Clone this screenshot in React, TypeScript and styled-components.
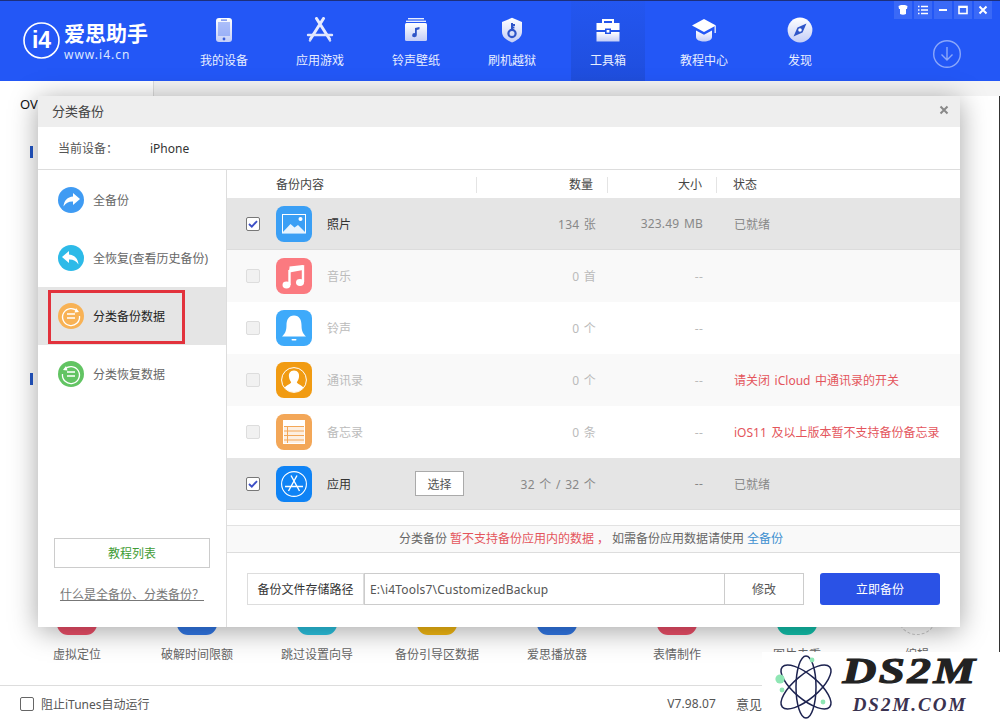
import React from 'react';
import styled, { createGlobalStyle } from 'styled-components';

const GlobalStyle = createGlobalStyle`
  html, body {
    margin: 0;
    padding: 0;
    background: #fff;
  }
  * {
    box-sizing: border-box;
  }
  body {
    font-family: "Noto Sans", "Noto Sans CJK SC", sans-serif;
    font-size: 12px;
    color: #333;
  }
`;

const Page = styled.div`
  position: relative;
  width: 1000px;
  height: 721px;
  overflow: hidden;
  display: flex;
  flex-direction: column;
  background: #fff;
  border-top: 1px solid #1c2f7c;
`;

/* header */
const Header = styled.header`
  height: 80px;
  flex: none;
  display: flex;
  background: #2357f6;
`;

const Logo = styled.div`
  width: 187px;
  flex: none;
  display: flex;
  align-items: flex-start;
  padding: 21px 0 0 23px;
  gap: 4px;
  color: #fff;
`;

const LogoText = styled.div`
  display: flex;
  flex-direction: column;
`;

const LogoName = styled.span`
  font-size: 21px;
  line-height: 22px;
  font-weight: 700;
  white-space: nowrap;
`;

const LogoUrl = styled.span`
  font-size: 12px;
  line-height: 14px;
  margin-top: 4px;
  letter-spacing: 1px;
  color: #dce6ff;
`;

const Nav = styled.nav`
  display: flex;
  gap: 22px;
`;

const NavItem = styled.div<{ $active?: boolean }>`
  width: 74px;
  height: 80px;
  display: flex;
  flex-direction: column;
  align-items: center;
  padding-top: 16px;
  color: #fff;
  background: ${(p) => (p.$active ? 'linear-gradient(#2356f0, #1f4edd)' : 'transparent')};
`;

const NavLabel = styled.span`
  margin-top: 9px;
  line-height: 18px;
  font-size: 12px;
  white-space: nowrap;
  color: #e8eeff;
`;

const WindowButtons = styled.div`
  position: absolute;
  top: 0;
  right: 8px;
  display: flex;
  gap: 2px;
`;

const WindowButton = styled.div`
  width: 18px;
  height: 18px;
  display: flex;
  align-items: center;
  justify-content: center;
  background: #3a69f7;
`;

const DownloadButton = styled.div`
  position: absolute;
  top: 38px;
  right: 38px;
  width: 30px;
  height: 30px;
`;

/* page under the dialog */
const TabBar = styled.div`
  height: 15px;
  flex: none;
  display: flex;
  background: #f4f4f4;
`;

const TabBlank = styled.div`
  width: 154px;
  background: #fff;
  border-right: 1px solid #ddd;
`;

const Main = styled.main`
  flex: 1;
  display: flex;
  flex-direction: column;
  min-height: 0;
  border-right: 1px solid #333;
`;

const Overview = styled.div`
  padding: 0 0 0 20px;
  font-size: 13px;
  line-height: 16px;
  color: #111;
`;

const SectionMark = styled.div<{ $gap: number }>`
  width: 3px;
  height: 12px;
  margin: ${(p) => p.$gap}px 0 0 30px;
  background: #2357c8;
`;

const ToolRow = styled.div`
  margin-top: auto;
  display: flex;
  padding: 0 0 21px 17px;
`;

const Tool = styled.div`
  width: 120px;
  display: flex;
  flex-direction: column;
  align-items: center;
  gap: 11px;
  color: #666;
  white-space: nowrap;
`;

const ToolTile = styled.div<{ $color: string; $dashed?: boolean }>`
  width: 40px;
  height: 40px;
  border-radius: ${(p) => (p.$dashed ? '50%' : '11px')};
  background: ${(p) => (p.$dashed ? 'transparent' : p.$color)};
  border: ${(p) => (p.$dashed ? '1px dashed #ccc' : 'none')};
`;

const ToolLabel = styled.span`
  line-height: 18px;
`;

const Footer = styled.footer`
  height: 36px;
  flex: none;
  display: flex;
  align-items: center;
  padding: 0 238px 0 20px;
  border-top: 1px solid #ddd;
  color: #555;
`;

const FooterCheck = styled.span`
  width: 14px;
  height: 14px;
  margin-right: 7px;
  border: 1px solid #666;
  border-radius: 2px;
`;

const Version = styled.span`
  margin-left: auto;
  margin-right: 20px;
  letter-spacing: 0.1px;
`;

const Feedback = styled.span`
  font-size: 13px;
`;

/* dialog */
const Dialog = styled.section`
  position: absolute;
  left: 38px;
  top: 95px;
  width: 922px;
  height: 531px;
  display: flex;
  flex-direction: column;
  background: #fff;
  box-shadow: 0 4px 26px rgba(0, 0, 0, 0.36);
`;

const TitleBar = styled.div`
  height: 31px;
  flex: none;
  display: flex;
  align-items: center;
  justify-content: space-between;
  padding: 0 11px 3px 14px;
  background: #eeeeee;
  font-size: 13px;
  color: #444;
`;

const DeviceBar = styled.div`
  height: 43px;
  flex: none;
  display: flex;
  align-items: center;
  padding-left: 20px;
  border-bottom: 1px solid #ddd;
  color: #555;
`;

const DeviceName = styled.span`
  margin-left: 32px;
  color: #333;
`;

const DialogBody = styled.div`
  flex: 1;
  display: flex;
  min-height: 0;
`;

const Sidebar = styled.aside`
  width: 189px;
  flex: none;
  display: flex;
  flex-direction: column;
  padding-top: 1px;
  border-right: 1px solid #ddd;
`;

const SideItem = styled.div<{ $active?: boolean }>`
  position: relative;
  height: 58px;
  display: flex;
  align-items: center;
  gap: 9px;
  padding-left: 20px;
  background: ${(p) => (p.$active ? '#e5e5e5' : '#fff')};
  color: ${(p) => (p.$active ? '#222' : '#666')};
  white-space: nowrap;
`;

const RedBox = styled.div`
  position: absolute;
  left: 10px;
  top: 3px;
  width: 137px;
  height: 54px;
  border: 3px solid #e2323c;
`;

const TutorialButton = styled.div`
  height: 30px;
  margin: auto 16px 0;
  display: flex;
  align-items: center;
  justify-content: center;
  border: 1px solid #ccc;
  color: #3f9c35;
`;

const HelpLink = styled.div`
  margin: 18px 0 23px;
  text-align: center;
  color: #777;
  text-decoration: underline;
  line-height: 18px;
`;

const Content = styled.div`
  flex: 1;
  display: flex;
  flex-direction: column;
  min-width: 0;
`;

const TableHead = styled.div`
  height: 28px;
  flex: none;
  display: flex;
  align-items: center;
  padding-top: 2px;
  color: #444;
`;

const HeadCell = styled.div<{ $width: number; $right?: boolean }>`
  width: ${(p) => p.$width}px;
  flex: none;
  text-align: ${(p) => (p.$right ? 'right' : 'left')};
  padding: ${(p) => (p.$right ? '0 14px 0 0' : '0 0 0 15px')};
  height: 16px;
  line-height: 16px;
  border-right: 1px solid #e4e4e4;
`;

const HeadFirst = styled(HeadCell)`
  padding-left: 49px;
`;

const HeadLast = styled(HeadCell)`
  border-right: none;
  padding-left: 16px;
`;

const Row = styled.div<{ $tone: 'on' | 'soft' | 'plain'; $off?: boolean }>`
  height: 52px;
  flex: none;
  display: grid;
  grid-template-columns: 49px 51px 88px 60px 121px 107px 1fr;
  align-items: center;
  background: ${(p) => (p.$tone === 'on' ? '#e5e5e5' : p.$tone === 'soft' ? '#f9f9f9' : '#fff')};
  border-bottom: ${(p) => (p.$tone === 'on' ? '1px solid #dcdcdc' : 'none')};
  color: ${(p) => (p.$off ? '#bbb' : '#888')};
`;

const Check = styled.span<{ $checked?: boolean }>`
  width: 14px;
  height: 14px;
  margin-left: 19px;
  display: flex;
  align-items: center;
  justify-content: center;
  border-radius: 2px;
  border: 1px solid ${(p) => (p.$checked ? '#777' : '#ddd')};
  background: ${(p) => (p.$checked ? '#fff' : '#f1f1f1')};
`;

const RowName = styled.span<{ $off?: boolean }>`
  color: ${(p) => (p.$off ? '#bbb' : '#333')};
`;

const SelectButton = styled.div`
  width: 49px;
  height: 25px;
  display: flex;
  align-items: center;
  justify-content: center;
  background: #fff;
  border: 1px solid #aaa;
  color: #555;
`;

const Count = styled.span`
  text-align: right;
  white-space: nowrap;
  word-spacing: 1.2px;
  letter-spacing: 0.2px;
`;

const Status = styled.span<{ $error?: boolean }>`
  padding-left: 31px;
  white-space: nowrap;
  word-spacing: 1.5px;
  color: ${(p) => (p.$error ? '#e4555c' : 'inherit')};
`;

const Notice = styled.div`
  height: 28px;
  flex: none;
  margin-top: 15px;
  display: flex;
  align-items: center;
  justify-content: center;
  padding: 0 5px 2px 0;
  gap: 3px;
  background: #f9f9f9;
  border-top: 1px solid #e2e2e2;
  border-bottom: 1px solid #ddd;
  color: #666;
  white-space: nowrap;
`;

const NoticeRed = styled.span`
  color: #e4555c;
`;

const NoticeLink = styled.span`
  color: #3d8fd0;
`;

const PathBar = styled.div`
  flex: 1;
  display: flex;
  align-items: center;
  padding: 0 20px 2px;
`;

const PathLabel = styled.div`
  width: 117px;
  height: 32px;
  display: flex;
  align-items: center;
  justify-content: center;
  border: 1px solid #ddd;
  color: #333;
`;

const PathInput = styled.div`
  width: 360px;
  height: 32px;
  display: flex;
  align-items: center;
  padding-left: 5px;
  border: 1px solid #ccc;
  border-right: none;
  color: #555;
  letter-spacing: 0.2px;
`;

const ModifyButton = styled.div`
  width: 80px;
  height: 32px;
  display: flex;
  align-items: center;
  justify-content: center;
  border: 1px solid #ccc;
  color: #555;
`;

const BackupButton = styled.div`
  width: 120px;
  height: 32px;
  margin-left: auto;
  display: flex;
  align-items: center;
  justify-content: center;
  border-radius: 3px;
  background: #2a52e6;
  color: #fff;
`;

/* watermark */
const Watermark = styled.div`
  position: absolute;
  left: 762px;
  top: 651px;
  width: 238px;
  height: 70px;
  display: flex;
  padding: 3px 0 0 13px;
  background: #fff;
`;

const MarkText = styled.div`
  width: 142px;
  display: flex;
  flex-direction: column;
  align-items: center;
  margin-left: 2px;
`;

const MarkBig = styled.span`
  font-family: "Liberation Serif", serif;
  font-style: italic;
  font-weight: 700;
  font-size: 36px;
  line-height: 32px;
  letter-spacing: 2px;
  color: #222;
  -webkit-text-stroke: 1.2px #222;
  transform: scaleX(1.3);
`;

const MarkSmall = styled.span`
  font-family: "Liberation Serif", serif;
  font-style: italic;
  font-weight: 700;
  font-size: 19px;
  line-height: 24px;
  margin-top: 6px;
  letter-spacing: 2px;
  color: #3a3250;
`;

const NavSvg: React.FC<{ id: string; children: React.ReactNode }> = ({ id, children }) => (
  <svg width="28" height="26" viewBox="0 0 28 26">
    <defs>
      <linearGradient id={id} x1="0" y1="0" x2="0" y2="1">
        <stop offset="0" stopColor="#ffffff" />
        <stop offset="1" stopColor="#c3cdf7" />
      </linearGradient>
    </defs>
    {children}
  </svg>
);

const navIcons: { label: string; active?: boolean; icon: React.ReactNode }[] = [
  {
    label: '我的设备',
    icon: (
      <NavSvg id="n1">
        <rect x="6" y="1" width="16" height="24" rx="3" fill="url(#n1)" />
        <rect x="8" y="5" width="12" height="14" fill="#6f8ff5" opacity="0.55" />
        <rect x="11" y="2.5" width="6" height="1.2" fill="#5b7bea" />
        <circle cx="14" cy="22" r="1.4" fill="#3a5fd8" />
      </NavSvg>
    ),
  },
  {
    label: '应用游戏',
    icon: (
      <NavSvg id="n2">
        <path d="M10.5 1.5 L23.5 22 M17.5 1.5 L4.5 22" stroke="#e6ebff" strokeWidth="3" fill="none" strokeLinecap="round" />
        <path d="M2 18 H26" stroke="#dfe6fd" strokeWidth="2.4" strokeLinecap="round" />
        <circle cx="4" cy="23.5" r="1.2" fill="#cfd8fa" />
        <circle cx="24" cy="23.5" r="1.2" fill="#cfd8fa" />
      </NavSvg>
    ),
  },
  {
    label: '铃声壁纸',
    icon: (
      <NavSvg id="n3">
        <rect x="6" y="1" width="16" height="1.4" fill="#e9eeff" />
        <rect x="4" y="3.6" width="20" height="1.4" fill="#e9eeff" />
        <rect x="3" y="6" width="22" height="18" rx="1.5" fill="url(#n3)" />
        <path d="M13 11 L17.5 10 V12.2 L14.8 12.9 V18 A2.3 2 0 1 1 13 16.2 Z" fill="#2f55c8" />
      </NavSvg>
    ),
  },
  {
    label: '刷机越狱',
    icon: (
      <NavSvg id="n4">
        <path d="M14 0.8 L24 5 V15 C24 20 19 23.5 14 25.5 C9 23.5 4 20 4 15 V5 Z" fill="url(#n4)" />
        <circle cx="14" cy="16.5" r="3.6" fill="none" stroke="#2f55c8" strokeWidth="2.2" />
        <path d="M14 13 V6 M14 8 H17 M14 10.6 H16.4" stroke="#2f55c8" strokeWidth="2" fill="none" />
      </NavSvg>
    ),
  },
  {
    label: '工具箱',
    active: true,
    icon: (
      <NavSvg id="n5">
        <path d="M9 6 V3 H19 V6" fill="none" stroke="#fff" strokeWidth="2" />
        <path d="M2.5 6 H25.5 V13 H17 V11.5 H11 V13 H2.5 Z" fill="#fff" />
        <path d="M2.5 15 H11 V17 H17 V15 H25.5 V24.5 H2.5 Z" fill="url(#n5)" />
        <rect x="12.6" y="13" width="2.8" height="2.6" fill="#fff" />
      </NavSvg>
    ),
  },
  {
    label: '教程中心',
    icon: (
      <NavSvg id="n6">
        <path d="M14 2 L26 8.5 L14 15 L2 8.5 Z" fill="#fff" />
        <path d="M6 13.5 L14 17.8 L22 13.5 V20 C22 23 18 24.5 14 24.5 C10 24.5 6 23 6 20 Z" fill="url(#n6)" />
        <path d="M25.2 9 V16" stroke="#dfe6fd" strokeWidth="1.4" />
      </NavSvg>
    ),
  },
  {
    label: '发现',
    icon: (
      <NavSvg id="n7">
        <circle cx="14" cy="13" r="12.4" fill="url(#n7)" />
        <path d="M20.5 6.5 L16.5 15.5 L7.5 19.5 L11.5 10.5 Z" fill="#2f55c8" />
        <circle cx="14" cy="13" r="1.8" fill="#fff" />
      </NavSvg>
    ),
  },
];

const tools = [
  { label: '虚拟定位', color: '#f0506a' },
  { label: '破解时间限额', color: '#3279ea' },
  { label: '跳过设置向导', color: '#2cc6e4' },
  { label: '备份引导区数据', color: '#f7bb12' },
  { label: '爱思播放器', color: '#3279ea' },
  { label: '表情制作', color: '#f0506a' },
  { label: '图片去重', color: '#12c4ae' },
  { label: '编辑', color: '', dashed: true },
];

const CheckMark = () => (
  <svg width="10" height="8" viewBox="0 0 10 8">
    <path d="M1 4 L3.8 6.6 L9 1.2" fill="none" stroke="#3d4fc6" strokeWidth="1.9" />
  </svg>
);

const SideIcon: React.FC<{ color: string; children: React.ReactNode }> = ({ color, children }) => (
  <svg width="26" height="26" viewBox="0 0 26 26">
    <circle cx="13" cy="13" r="13" fill={color} />
    {children}
  </svg>
);

const RowIcon: React.FC<{ color: string; children: React.ReactNode }> = ({ color, children }) => (
  <svg width="36" height="36" viewBox="0 0 36 36">
    <rect width="36" height="36" rx="8" fill={color} />
    {children}
  </svg>
);

const rows = [
  {
    name: '照片',
    count: '134 张',
    size: '323.49 MB',
    status: '已就绪',
    tone: 'on' as const,
    icon: (
      <RowIcon color="#3a9ff5">
        <rect x="6.5" y="8.5" width="23" height="18.5" fill="none" stroke="#fff" strokeWidth="1" />
        <circle cx="24.5" cy="13" r="2" fill="#fff" />
        <path d="M6 27 L14.5 18 L18.5 21.5 L22 19 L30 27 Z" fill="#e6f3fe" />
      </RowIcon>
    ),
  },
  {
    name: '音乐',
    count: '0 首',
    size: '--',
    tone: 'soft' as const,
    off: true,
    icon: (
      <RowIcon color="#fb7a80">
        <path d="M13.5 12 L27 8.5 V24 M13.5 12 V27" fill="none" stroke="#fff" strokeWidth="2.4" />
        <path d="M13.5 8.6 L27 7 V12 L13.5 14.5 Z" fill="#fff" />
        <ellipse cx="10.5" cy="27" rx="4" ry="3.4" fill="#fff" />
        <ellipse cx="24" cy="24.5" rx="4" ry="3.4" fill="#fff" />
      </RowIcon>
    ),
  },
  {
    name: '铃声',
    count: '0 个',
    size: '--',
    tone: 'plain' as const,
    off: true,
    icon: (
      <RowIcon color="#3eaafa">
        <path d="M18 5.5 C23.5 5.5 25.5 10 25.5 15 C25.5 21 27 23.5 30 26.5 H6 C9 23.5 10.5 21 10.5 15 C10.5 10 12.5 5.5 18 5.5 Z" fill="#fff" />
        <rect x="15.5" y="29" width="5" height="1.6" rx="0.8" fill="#fff" />
      </RowIcon>
    ),
  },
  {
    name: '通讯录',
    count: '0 个',
    size: '--',
    tone: 'soft' as const,
    off: true,
    icon: (
      <RowIcon color="#f19b12">
        <circle cx="18" cy="18" r="12.4" fill="none" stroke="#fff" strokeWidth="1" />
        <path d="M18 8.5 C22 8.5 23.5 11.5 23 15 C22.7 17.5 21.5 19 20.8 20.5 C22 22.5 25.5 23 27.5 25.5 C25 28.5 21.5 30 18 30 C14.5 30 11 28.5 8.5 25.5 C10.5 23 14 22.5 15.2 20.5 C14.5 19 13.3 17.5 13 15 C12.5 11.5 14 8.5 18 8.5 Z" fill="#fff" />
      </RowIcon>
    ),
  },
  {
    name: '备忘录',
    count: '0 条',
    size: '--',
    tone: 'plain' as const,
    off: true,
    icon: (
      <RowIcon color="#f3a758">
        <rect x="7" y="6" width="22" height="24" fill="#fff" />
        <path d="M8 12.5 H28 V29 H8 Z" fill="#f3a758" opacity="0.18" />
        <path d="M8 12.5 H28 M8 17 H28 M8 21.5 H28 M8 26 H28 M11.5 12.5 V29" stroke="#f3a758" strokeWidth="1" fill="none" />
      </RowIcon>
    ),
  },
  {
    name: '应用',
    count: '32 个 / 32 个',
    size: '--',
    status: '已就绪',
    tone: 'on' as const,
    selectable: true,
    icon: (
      <RowIcon color="#0f83f5">
        <circle cx="18" cy="18" r="12.4" fill="none" stroke="#fff" strokeWidth="1.1" />
        <path d="M15 9.5 L23.5 25 M21 9.5 L12.5 25 M9 20.5 H27" stroke="#fff" strokeWidth="1.4" fill="none" />
      </RowIcon>
    ),
  },
];

const statusNotes: Record<string, string> = {
  通讯录: '请关闭 iCloud 中通讯录的开关',
  备忘录: 'iOS11 及以上版本暂不支持备份备忘录',
};

const App: React.FC = () => (
  <Page>
    <GlobalStyle />
    <Header>
      <Logo>
        <svg width="37" height="37" viewBox="0 0 37 37">
          <circle cx="18.5" cy="18.5" r="17.5" fill="none" stroke="#fff" strokeWidth="1.6" />
          <text x="18.5" y="26" textAnchor="middle" fill="#fff" fontSize="23" fontWeight="700" fontFamily="Liberation Sans, sans-serif">
            i4
          </text>
        </svg>
        <LogoText>
          <LogoName>爱思助手</LogoName>
          <LogoUrl>www.i4.cn</LogoUrl>
        </LogoText>
      </Logo>
      <Nav>
        {navIcons.map((item) => (
          <NavItem key={item.label} $active={item.active}>
            {item.icon}
            <NavLabel>{item.label}</NavLabel>
          </NavItem>
        ))}
      </Nav>
    </Header>
    <WindowButtons>
      <WindowButton>
        <svg width="12" height="12" viewBox="0 0 12 12">
          <path d="M1.5 2 L4 1 H8 L10.5 2 L10 5 L9 5 V10 C7 11 5 11 3 10 V5 L2 5 Z" fill="#fff" />
        </svg>
      </WindowButton>
      <WindowButton>
        <svg width="12" height="12" viewBox="0 0 12 12">
          <path d="M1 2.5 H2.5 M4 2.5 H11 M1 6 H2.5 M4 6 H11 M1 9.5 H2.5 M4 9.5 H11" stroke="#fff" strokeWidth="1.6" />
        </svg>
      </WindowButton>
      <WindowButton>
        <svg width="12" height="12" viewBox="0 0 12 12">
          <path d="M2 6 H10" stroke="#fff" strokeWidth="2" />
        </svg>
      </WindowButton>
      <WindowButton>
        <svg width="12" height="12" viewBox="0 0 12 12">
          <rect x="2" y="2.5" width="8" height="7" fill="none" stroke="#fff" strokeWidth="1.6" />
          <path d="M2 3 H10" stroke="#fff" strokeWidth="2" />
        </svg>
      </WindowButton>
      <WindowButton>
        <svg width="12" height="12" viewBox="0 0 12 12">
          <path d="M2.5 2.5 L9.5 9.5 M9.5 2.5 L2.5 9.5" stroke="#fff" strokeWidth="2" />
        </svg>
      </WindowButton>
    </WindowButtons>
    <DownloadButton>
      <svg width="30" height="30" viewBox="0 0 30 30">
        <circle cx="15" cy="15" r="13.3" fill="none" stroke="#8ba7fa" strokeWidth="1.4" />
        <path d="M15 8 V21 M9.5 15.5 L15 21 L20.5 15.5" fill="none" stroke="#8ba7fa" strokeWidth="1.4" />
      </svg>
    </DownloadButton>

    <TabBar>
      <TabBlank />
    </TabBar>
    <Main>
      <Overview>OV</Overview>
      <SectionMark $gap={34} />
      <SectionMark $gap={215} />
      <ToolRow>
        {tools.map((t) => (
          <Tool key={t.label}>
            <ToolTile $color={t.color} $dashed={t.dashed} />
            <ToolLabel>{t.label}</ToolLabel>
          </Tool>
        ))}
      </ToolRow>
    </Main>
    <Footer>
      <FooterCheck />
      <span>阻止iTunes自动运行</span>
      <Version>V7.98.07</Version>
      <Feedback>意见</Feedback>
    </Footer>

    <Dialog>
      <TitleBar>
        <span>分类备份</span>
        <svg width="10" height="10" viewBox="0 0 10 10">
          <path d="M1.5 1.5 L8.5 8.5 M8.5 1.5 L1.5 8.5" stroke="#888" strokeWidth="2" />
        </svg>
      </TitleBar>
      <DeviceBar>
        <span>当前设备：</span>
        <DeviceName>iPhone</DeviceName>
      </DeviceBar>
      <DialogBody>
        <Sidebar>
          <SideItem>
            <SideIcon color="#3f9bf3">
              <path d="M15 6 L22 12 L15 18 V14.5 C11 14.3 7.8 15.6 5.5 19.5 C6 13.5 9.5 9.8 15 9.4 Z" fill="#fff" />
            </SideIcon>
            全备份
          </SideItem>
          <SideItem>
            <SideIcon color="#2dbae8">
              <path d="M11 6 L4 12 L11 18 V14.5 C15 14.3 18.2 15.6 20.5 19.5 C20 13.5 16.5 9.8 11 9.4 Z" fill="#fff" />
            </SideIcon>
            全恢复(查看历史备份)
          </SideItem>
          <SideItem $active>
            <SideIcon color="#f8b255">
              <path d="M19.5 8.5 A8.5 8.5 0 1 0 21.5 13" fill="none" stroke="#fff" strokeWidth="1.3" />
              <path d="M18 5 L21 9 L16.5 9.5 Z" fill="#fff" />
              <path d="M9 11 H17 M9 15 H17" stroke="#fff" strokeWidth="1.4" />
            </SideIcon>
            分类备份数据
            <RedBox />
          </SideItem>
          <SideItem>
            <SideIcon color="#62c463">
              <path d="M6.5 8.5 A8.5 8.5 0 1 1 4.5 13" fill="none" stroke="#fff" strokeWidth="1.3" />
              <path d="M8 5 L5 9 L9.5 9.5 Z" fill="#fff" />
              <path d="M9 11 H17 M9 15 H17" stroke="#fff" strokeWidth="1.4" />
            </SideIcon>
            分类恢复数据
          </SideItem>
          <TutorialButton>教程列表</TutorialButton>
          <HelpLink>什么是全备份、分类备份？</HelpLink>
        </Sidebar>
        <Content>
          <TableHead>
            <HeadFirst $width={250}>备份内容</HeadFirst>
            <HeadCell $width={131} $right>数量</HeadCell>
            <HeadCell $width={109} $right>大小</HeadCell>
            <HeadLast $width={100}>状态</HeadLast>
          </TableHead>
          {rows.map((r) => (
            <Row key={r.name} $tone={r.tone} $off={r.off}>
              <Check $checked={!r.off}>{!r.off && <CheckMark />}</Check>
              {r.icon}
              <RowName $off={r.off}>{r.name}</RowName>
              <span>{r.selectable && <SelectButton>选择</SelectButton>}</span>
              <Count>{r.count}</Count>
              <Count>{r.size}</Count>
              <Status $error={!!statusNotes[r.name]}>{statusNotes[r.name] ?? r.status}</Status>
            </Row>
          ))}
          <Notice>
            分类备份
            <NoticeRed>暂不支持备份应用内的数据 ，</NoticeRed>
            如需备份应用数据请使用
            <NoticeLink>全备份</NoticeLink>
          </Notice>
          <PathBar>
            <PathLabel>备份文件存储路径</PathLabel>
            <PathInput>E:\i4Tools7\CustomizedBackup</PathInput>
            <ModifyButton>修改</ModifyButton>
            <BackupButton>立即备份</BackupButton>
          </PathBar>
        </Content>
      </DialogBody>
    </Dialog>

    <Watermark>
      <svg width="62" height="64" viewBox="0 0 62 64">
        <g fill="none" stroke="#1d2350" strokeWidth="1.5">
          <ellipse cx="31" cy="32" rx="31" ry="12" transform="rotate(40 31 32)" />
          <ellipse cx="31" cy="32" rx="31" ry="12" transform="rotate(-40 31 32)" />
          <ellipse cx="31" cy="32" rx="31" ry="10" transform="rotate(90 31 32)" />
        </g>
        <circle cx="5" cy="24" r="4.6" fill="#8fe6b4" />
        <circle cx="7" cy="35" r="2.4" fill="#8fe6b4" />
        <circle cx="37" cy="5" r="2.4" fill="#8fe6b4" />
        <circle cx="48" cy="47" r="2.4" fill="#8fe6b4" />
      </svg>
      <MarkText>
        <MarkBig>DS2M</MarkBig>
        <MarkSmall>DS2M.COM</MarkSmall>
      </MarkText>
    </Watermark>
  </Page>
);

export default App;
